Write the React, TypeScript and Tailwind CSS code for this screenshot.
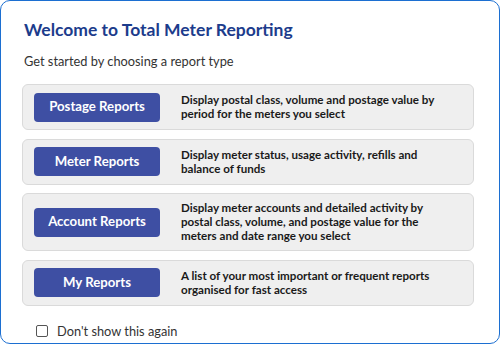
import React from "react";

const reports = [
  { label: "Postage Reports", desc: "Display postal class, volume and postage value by period for the meters you select" },
  { label: "Meter Reports", desc: "Display meter status, usage activity, refills and balance of funds" },
  { label: "Account Reports", desc: "Display meter accounts and detailed activity by postal class, volume, and postage value for the meters and date range you select" },
  { label: "My Reports", desc: "A list of your most important or frequent reports organised for fast access" },
];

export default function App() {
  return (
    <div
      className="w-[500px] h-[344px] bg-white border border-[#1c6fd1] rounded-[10px] flex flex-col pl-[21px] pr-[25px] pt-[16px]"
      style={{ fontFamily: "Lato, 'Open Sans', sans-serif" }}
    >
      <h1 className="text-[17.5px] leading-[26px] font-bold text-[#1c3c8c] pl-[2px]">Welcome to Total Meter Reporting</h1>
      <p className="mt-[9px] text-[12.8px] leading-[18px] text-[#333] pl-[2px]">Get started by choosing a report type</p>
      <div className="mt-[14px] flex flex-col gap-[8.6px]">
        {reports.map((r) => (
          <div
            key={r.label}
            className="flex items-center min-h-[46px] bg-[#efefef] border border-[#dadada] rounded-[6px] pl-[11px] pr-[10px] py-[7px]"
          >
            <button className="w-[126px] h-[29px] shrink-0 rounded-[4px] bg-[#3e4fa3] text-white text-[13.2px] font-bold">
              {r.label}
            </button>
            <p className="ml-[21px] text-[11.6px] leading-[14px] font-bold text-[#1a1a1a] pr-[20px]">{r.desc}</p>
          </div>
        ))}
      </div>
      <label className="mt-[16px] ml-[14px] flex items-center gap-[9px] text-[12.8px] leading-[18px] text-[#333]">
        <span className="w-[12px] h-[12px] border border-[#555] rounded-[2px] bg-white"></span>
        Don't show this again
      </label>
    </div>
  );
}
